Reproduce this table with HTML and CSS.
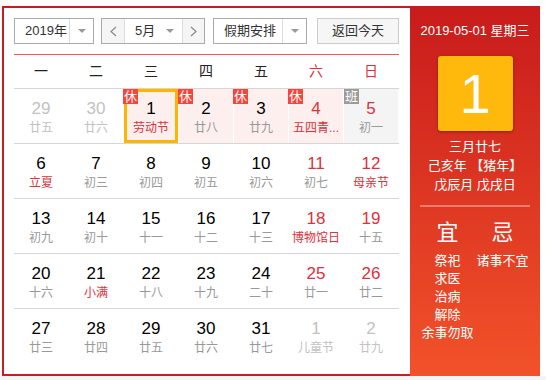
FILE: index.html
```html
<!DOCTYPE html>
<html lang="zh-CN">
<head>
<meta charset="utf-8">
<title>万年历</title>
<link rel="stylesheet" href="styles.css">
</head>
<body>
<div class="wrap">
  <div class="main">
    <div class="toolbar">
      <div class="select sel-year">
        <span class="sel-text">2019年</span>
        <span class="sel-arrow"><i class="tri"></i></span>
      </div>
      <div class="month-group">
        <span class="nav-btn"><svg width="7" height="11" viewBox="0 0 7 11"><polyline points="6,1 1,5.5 6,10" fill="none" stroke="#888" stroke-width="1.2"/></svg></span>
        <span class="month-sel"><span class="sel-text">5月</span><i class="tri"></i></span>
        <span class="nav-btn nav-next"><svg width="7" height="11" viewBox="0 0 7 11"><polyline points="1,1 6,5.5 1,10" fill="none" stroke="#888" stroke-width="1.2"/></svg></span>
      </div>
      <div class="select sel-holiday">
        <span class="sel-text">假期安排</span>
        <span class="sel-arrow"><i class="tri"></i></span>
      </div>
      <div class="today-btn">返回今天</div>
    </div>

    <div class="week-head">
      <span>一</span><span>二</span><span>三</span><span>四</span><span>五</span><span class="red">六</span><span class="red">日</span>
    </div>

    <div class="days">
      <div class="row">
        <div class="cell other"><div class="num">29</div><div class="lunar">廿五</div></div>
        <div class="cell other"><div class="num">30</div><div class="lunar">廿六</div></div>
        <div class="cell rest selected"><span class="badge">休</span><div class="num">1</div><div class="lunar fest">劳动节</div></div>
        <div class="cell rest"><span class="badge">休</span><div class="num">2</div><div class="lunar">廿八</div></div>
        <div class="cell rest"><span class="badge">休</span><div class="num">3</div><div class="lunar">廿九</div></div>
        <div class="cell rest weekend"><span class="badge">休</span><div class="num">4</div><div class="lunar fest" title="五四青年节">五四青...</div></div>
        <div class="cell work weekend"><span class="badge badge-work">班</span><div class="num">5</div><div class="lunar">初一</div></div>
      </div>
      <div class="row">
        <div class="cell"><div class="num">6</div><div class="lunar fest">立夏</div></div>
        <div class="cell"><div class="num">7</div><div class="lunar">初三</div></div>
        <div class="cell"><div class="num">8</div><div class="lunar">初四</div></div>
        <div class="cell"><div class="num">9</div><div class="lunar">初五</div></div>
        <div class="cell"><div class="num">10</div><div class="lunar">初六</div></div>
        <div class="cell weekend"><div class="num">11</div><div class="lunar">初七</div></div>
        <div class="cell weekend"><div class="num">12</div><div class="lunar fest">母亲节</div></div>
      </div>
      <div class="row">
        <div class="cell"><div class="num">13</div><div class="lunar">初九</div></div>
        <div class="cell"><div class="num">14</div><div class="lunar">初十</div></div>
        <div class="cell"><div class="num">15</div><div class="lunar">十一</div></div>
        <div class="cell"><div class="num">16</div><div class="lunar">十二</div></div>
        <div class="cell"><div class="num">17</div><div class="lunar">十三</div></div>
        <div class="cell weekend"><div class="num">18</div><div class="lunar fest">博物馆日</div></div>
        <div class="cell weekend"><div class="num">19</div><div class="lunar">十五</div></div>
      </div>
      <div class="row">
        <div class="cell"><div class="num">20</div><div class="lunar">十六</div></div>
        <div class="cell"><div class="num">21</div><div class="lunar fest">小满</div></div>
        <div class="cell"><div class="num">22</div><div class="lunar">十八</div></div>
        <div class="cell"><div class="num">23</div><div class="lunar">十九</div></div>
        <div class="cell"><div class="num">24</div><div class="lunar">二十</div></div>
        <div class="cell weekend"><div class="num">25</div><div class="lunar">廿一</div></div>
        <div class="cell weekend"><div class="num">26</div><div class="lunar">廿二</div></div>
      </div>
      <div class="row last">
        <div class="cell"><div class="num">27</div><div class="lunar">廿三</div></div>
        <div class="cell"><div class="num">28</div><div class="lunar">廿四</div></div>
        <div class="cell"><div class="num">29</div><div class="lunar">廿五</div></div>
        <div class="cell"><div class="num">30</div><div class="lunar">廿六</div></div>
        <div class="cell"><div class="num">31</div><div class="lunar">廿七</div></div>
        <div class="cell other"><div class="num">1</div><div class="lunar">儿童节</div></div>
        <div class="cell other"><div class="num">2</div><div class="lunar">廿九</div></div>
      </div>
    </div>
  </div>

  <div class="panel">
    <div class="p-date">2019-05-01 星期三</div>
    <div class="p-day">1</div>
    <div class="p-info">
      <div>三月廿七</div>
      <div>己亥年 【猪年】</div>
      <div>戊辰月 戊戌日</div>
    </div>
    <div class="p-sep"></div>
    <div class="p-yiji">
      <div class="p-col">
        <div class="p-big">宜</div>
        <div class="p-item">祭祀</div>
        <div class="p-item">求医</div>
        <div class="p-item">治病</div>
        <div class="p-item">解除</div>
        <div class="p-item">余事勿取</div>
      </div>
      <div class="p-col">
        <div class="p-big">忌</div>
        <div class="p-item">诸事不宜</div>
      </div>
    </div>
  </div>
</div>
<div class="footer-strip"></div>
</body>
</html>
```

FILE: styles.css
```css
* { box-sizing: border-box; }

body {
  margin: 0;
  background: #fff;
  font-family: "Liberation Sans", "Noto Sans CJK SC", sans-serif;
  color: #333;
}

.wrap {
  display: flex;
  margin: 6px 0 0 2px;
  width: 538px;
  height: 370px;
}

.main {
  width: 408px;
  border: 2px solid #c91d1d;
  border-right: none;
  padding: 10px 9px 0 10px;
}

/* toolbar */
.toolbar {
  display: flex;
  height: 26px;
  margin-bottom: 10px;
  font-size: 13px;
}

.select {
  display: flex;
  border: 1px solid #a9a9a9;
  background: #fff;
  height: 26px;
}
.sel-year { width: 80px; margin-right: 7px; }
.sel-holiday { width: 94px; margin-right: 10px; }

.sel-text {
  flex: 1;
  line-height: 24px;
  padding-left: 10px;
  color: #333;
}
.sel-arrow {
  width: 24px;
  border-left: 1px solid #ddd;
  display: flex;
  align-items: center;
  justify-content: center;
}
.tri {
  display: block;
  width: 0;
  height: 0;
  border-left: 4px solid transparent;
  border-right: 4px solid transparent;
  border-top: 4px solid #999;
}

.month-group {
  display: flex;
  width: 104px;
  height: 26px;
  border: 1px solid #a9a9a9;
  margin-right: 8px;
}
.nav-btn {
  width: 23px;
  background: #f5f5f5;
  display: flex;
  align-items: center;
  justify-content: center;
  border-right: 1px solid #ddd;
}
.nav-next {
  width: 22px;
  border-right: none;
  border-left: 1px solid #ddd;
}
.month-sel {
  flex: 1;
  display: flex;
  align-items: center;
  padding-right: 8px;
}
.month-sel .sel-text { padding-left: 10px; }

.today-btn {
  width: 82px;
  height: 26px;
  border: 1px solid #ccc;
  background: #f6f6f6;
  text-align: center;
  line-height: 24px;
  color: #333;
}

/* week header */
.week-head {
  display: grid;
  grid-template-columns: repeat(7, 55px);
  width: 385px;
  border-top: 1px solid #f05a4a;
  border-bottom: 1px solid #d6d6d6;
  height: 35px;
  font-size: 14px;
  line-height: 33px;
  text-align: center;
  color: #222;
}
.week-head span { margin-right: 1px; }
.week-head .red { color: #e0303a; }

/* day grid */
.row {
  display: grid;
  grid-template-columns: repeat(7, 54px);
  column-gap: 1px;
  width: 385px;
  height: 55px;
  border-bottom: 1px solid #d6d6d6;
}
.row.last { border-bottom: none; }

.cell {
  position: relative;
  height: 54px;
  padding-top: 9px;
  text-align: center;
}
.num {
  font-size: 17px;
  line-height: 22px;
  color: #000;
}
.lunar {
  font-size: 12px;
  line-height: 16px;
  color: #999;
  white-space: nowrap;
}

.weekend .num { color: #e0303a; }
.lunar.fest { color: #e0303a; }
.other .num, .other .lunar { color: #c2c2c2; }

.rest { background: #fdefee; }
.work { background: #f4f4f4; }
.selected { box-shadow: inset 0 0 0 3px #ffb400; }

.badge {
  position: absolute;
  top: 0;
  left: -1px;
  width: 15px;
  height: 15px;
  background: #f5453d;
  color: #fff;
  font-size: 13px;
  line-height: 15px;
  text-align: center;
  z-index: 1;
}
.badge-work { background: #9b9b9b; left: 0; }

/* right panel */
.panel {
  width: 130px;
  background: linear-gradient(to bottom, #c81b1b 0%, #f2522a 100%);
  color: #fff;
  padding: 15px 10px 0;
  text-align: center;
}
.p-date {
  font-size: 13px;
  line-height: 20px;
  white-space: nowrap;
}
.p-day {
  width: 75px;
  height: 75px;
  margin: 15px auto 0;
  background: #ffb80c;
  border-radius: 3px;
  box-shadow: 0 1px 3px rgba(0, 0, 0, 0.35);
  font-size: 56px;
  line-height: 75px;
  color: #fff;
}
.p-info {
  margin-top: 6px;
  font-size: 13px;
  line-height: 19px;
}
.p-sep {
  height: 2px;
  margin-top: 11px;
  background: rgba(255, 255, 255, 0.35);
}
.p-yiji {
  display: flex;
  margin-top: 11px;
}
.p-col {
  width: 55px;
  display: flex;
  flex-direction: column;
  align-items: center;
}
.p-big {
  font-size: 22px;
  line-height: 30px;
  margin-bottom: 4px;
}
.p-item {
  font-size: 13px;
  line-height: 18px;
  white-space: nowrap;
}

.footer-strip {
  height: 10px;
  background: #f4f4f4;
}
```
